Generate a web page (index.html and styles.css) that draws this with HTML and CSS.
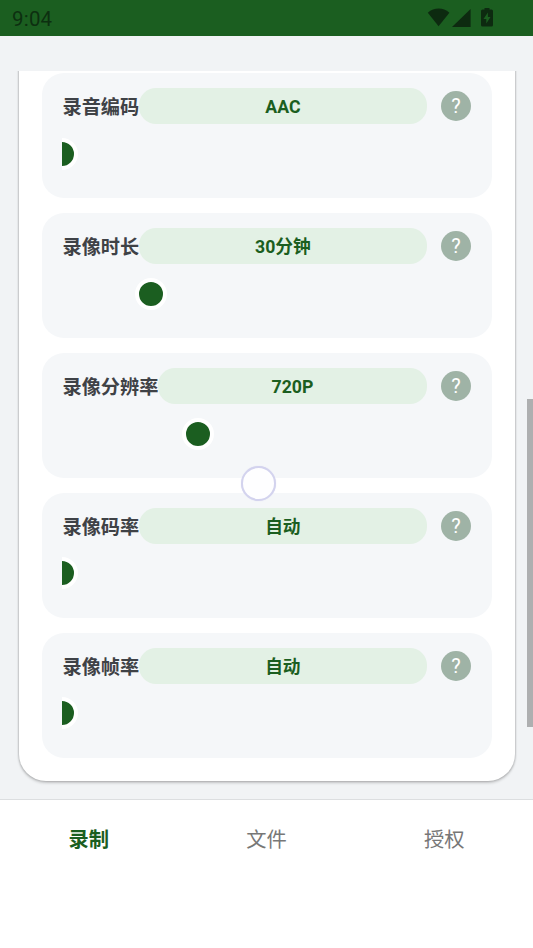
FILE: index.html
```html
<!DOCTYPE html>
<html lang="zh-CN">
<head>
<meta charset="utf-8">
<title>录制</title>
<link rel="stylesheet" href="styles.css">
</head>
<body>
<header class="status">
  <span class="clock">9:04</span>
  <svg class="status-icons" width="70" height="24" viewBox="0 0 70 24">
    <path d="M.8 6.8C7 1.200 16.200 1.200 22.400 6.800L11.600 20.200Z"/>
    <path d="M43.600 3V21H25Z"/>
    <path fill-rule="evenodd" d="M57.500 2h5v1.500h2q1.500 0 1.500 1.500v14q0 1.500-1.500 1.500h-9Q54 20.500 54 19V5q0-1.500 1.500-1.500h2ZM60.900 6.500L56.500 13h2.800v4.500L63.500 11h-2.600Z"/>
  </svg>
</header>
<main class="scroll">
  <div class="panel">
    <section class="card">
      <div class="row"><span class="label">录音编码</span><span class="value">AAC</span><button class="help">?</button></div>
      <div class="slider"><i class="knob"></i></div>
    </section>
    <section class="card">
      <div class="row"><span class="label">录像时长</span><span class="value">30分钟</span><button class="help">?</button></div>
      <div class="slider"><i class="knob" style="margin-left:72.800px"></i></div>
    </section>
    <section class="card">
      <div class="row"><span class="label">录像分辨率</span><span class="value">720P</span><button class="help">?</button></div>
      <div class="slider"><i class="knob" style="margin-left:120.300px"></i></div>
    </section>
    <section class="card">
      <div class="row"><span class="label">录像码率</span><span class="value">自动</span><button class="help">?</button></div>
      <div class="slider"><i class="knob"></i></div>
    </section>
    <section class="card">
      <div class="row"><span class="label">录像帧率</span><span class="value">自动</span><button class="help">?</button></div>
      <div class="slider"><i class="knob"></i></div>
    </section>
  </div>
  <div class="scrollbar"></div>
</main>
<nav class="tabs">
  <a class="tab active">录制</a>
  <a class="tab">文件</a>
  <a class="tab">授权</a>
</nav>
<div class="touch"></div>
</body>
</html>
```

FILE: styles.css
```css
* { box-sizing: border-box; }
body {
  margin: 0;
  height: 948px;
  overflow: hidden;
  display: flex;
  flex-direction: column;
  background: #f1f3f5;
  font-family: Roboto, "Noto Sans CJK SC", sans-serif;
}
.status {
  height: 35.500px;
  flex: none;
  display: flex;
  align-items: center;
  justify-content: space-between;
  padding: 0 36.500px 0 12px;
  background: #1b5e20;
  color: #0d2f10;
}
.clock { font-size: 20.500px; line-height: 24px; padding-top: 2px; letter-spacing: .2px; }
.status-icons { fill: #0d2a10; }
.scroll {
  position: relative;
  height: 728px;
  flex: none;
  margin-top: 35.500px;
  overflow: hidden;
}
.panel {
  height: 739.500px;
  margin: -29.500px 18.500px 0 18.500px;
  padding: 31.900px 23px 0;
  display: flex;
  flex-direction: column;
  gap: 15px;
  background: #fff;
  border-radius: 27px;
  box-shadow: 0 0 1.500px 1px rgba(0, 0, 0, .12), 0 2px 3px rgba(0, 0, 0, .18);
}
.card {
  height: 124.850px;
  flex: none;
  padding: 15px 20.500px 0;
  background: #f5f7f9;
  border-radius: 22px;
}
.row { height: 36px; display: flex; align-items: center; }
.label { font-size: 19.200px; font-weight: 700; color: #3f4246; white-space: nowrap; padding-left: .5px; }
.value {
  flex: 1;
  height: 36px;
  line-height: 38px;
  border-radius: 17px;
  background: #e3f1e5;
  color: #1b5e20;
  font-size: 17.700px;
  font-weight: 700;
  text-align: center;
}
.help {
  width: 30px;
  height: 30px;
  margin-left: 14.500px;
  padding: 0;
  border: 0;
  border-radius: 50%;
  background: #9fb3a6;
  color: #fff;
  font: 400 20px/31px Roboto, sans-serif;
}
.slider {
  height: 32px;
  margin-top: 13.500px;
  overflow: hidden;
}
.knob {
  display: block;
  width: 32px;
  height: 32px;
  margin-left: -16px;
  border: 4px solid #fff;
  border-radius: 50%;
  background: #1b5e20;
}
.scrollbar {
  position: absolute;
  right: 0;
  top: 328px;
  width: 6px;
  height: 328px;
  background: #aeafb0;
}
.tabs {
  flex: 1;
  display: flex;
  background: #fff;
  border-top: 1px solid #dcdee0;
}
.tab {
  flex: 1;
  padding-top: 25px;
  line-height: 31px;
  font-size: 20.300px;
  font-weight: 400;
  text-align: center;
  color: #777;
}
.tab.active { font-weight: 700; color: #1b5e20; }
.touch {
  position: absolute;
  left: 241px;
  top: 466px;
  width: 35px;
  height: 35px;
  border: 2px solid #d3d3ee;
  border-radius: 50%;
  background: #fefeff;
  box-shadow: 0 0 1px #dcdcf0;
}
```
